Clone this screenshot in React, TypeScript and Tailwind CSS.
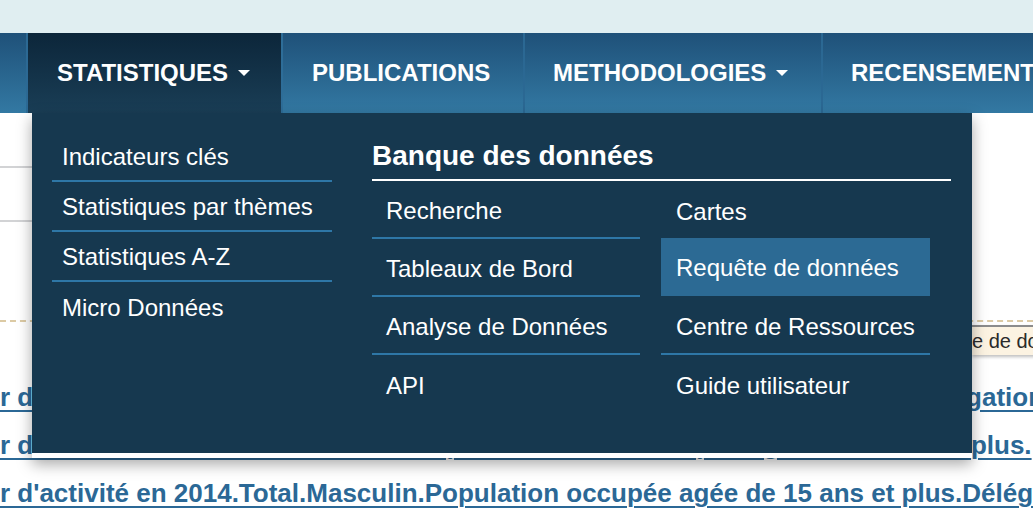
import React from 'react';

const leftLinks = ['Indicateurs clés', 'Statistiques par thèmes', 'Statistiques A-Z', 'Micro Données'];

const bankRows: [string, string][] = [
  ['Recherche', 'Cartes'],
  ['Tableaux de Bord', 'Requête de données'],
  ['Analyse de Données', 'Centre de Ressources'],
  ['API', 'Guide utilisateur'],
];

const resultLines = [
  "r d'activité en 2014.Total.Total.Population occupée agée de 15 ans et plus.Délégation",
  "r d'activité en 2014.Total.Féminin.Population active occupée agée de 15 ans et plus.",
  "r d'activité en 2014.Total.Masculin.Population occupée agée de 15 ans et plus.Délégation",
];

const Caret = () => (
  <span className="inline-block w-0 h-0 border-l-[6px] border-r-[6px] border-t-[6px] border-l-transparent border-r-transparent border-t-white" />
);

const App: React.FC = () => {
  return (
    <div className="w-[1033px] h-[520px] overflow-hidden bg-white font-['Liberation_Sans',Arial,sans-serif]">
      {/* Top band */}
      <div className="h-[33px] bg-[#e0eef1]" />

      {/* Main nav */}
      <nav className="h-[80px] flex bg-gradient-to-b from-[#1f5179] to-[#3379a3] text-white text-[24px] font-bold uppercase whitespace-nowrap">
        <div className="w-[28px] shrink-0 border-r-2 border-[#2c6994]" />
        <div className="w-[253px] shrink-0 flex items-center gap-[10px] pl-[29px] bg-gradient-to-b from-[#0c263a] to-[#1a3e56]">
          Statistiques <Caret />
        </div>
        <div className="w-[242px] shrink-0 flex items-center pl-[29px] border-l-2 border-[#2e6d98]">Publications</div>
        <div className="w-[298px] shrink-0 flex items-center gap-[10px] pl-[28px] border-l-2 border-[#2b6893]">
          Methodologies <Caret />
        </div>
        <div className="flex-1 flex items-center pl-[28px] border-l-2 border-[#2b6893]">Recensement</div>
      </nav>

      {/* Page content under the menu */}
      <div className="relative">
        <div className="pt-[53px]">
          <div className="w-[320px] h-[54px] border-t-2 border-[#d2d3d5]" />
          <div className="w-[320px] h-[100px] border-t-2 border-[#d2d3d5]" />
          <div className="border-t-2 border-dashed border-[#dccaa4]" />
          <div className="pt-[51px]">
            {resultLines.map((line, i) => (
              <div key={i} className="h-[48px] leading-[48px] text-[26px] font-bold text-[#2b6896] underline underline-offset-[4px] decoration-[2px] whitespace-nowrap">
                {line}
              </div>
            ))}
          </div>
        </div>

        {/* Tooltip */}
        <div className="absolute left-[972px] top-[212px] h-[30px] pr-4 flex items-center bg-[#fcf3e2] border-t-2 border-[#8c8c8c] shadow-[0_2px_3px_rgba(0,0,0,0.25)] text-[20px] text-[#2a2a2a] whitespace-nowrap">
          e de données
        </div>

        {/* Dropdown panel */}
        <div className="absolute left-[32px] top-0 w-[940px] pb-[5px] bg-white shadow-[0_6px_14px_rgba(0,0,0,0.35)]">
          <div className="h-[340px] bg-[#16384f] text-white flex pl-[20px] pt-[19px]">
            <ul className="w-[280px] shrink-0">
              {leftLinks.map((label, i) => (
                <li
                  key={label}
                  className={`h-[50px] flex items-center pl-[10px] pt-[2px] text-[24px] ${i < leftLinks.length - 1 ? 'border-b-2 border-[#2e77a7]' : ''}`}
                >
                  {label}
                </li>
              ))}
            </ul>

            <div className="w-[579px] ml-[40px]">
              <h3 className="h-[49px] flex items-center text-[28px] font-bold border-b-2 border-white">Banque des données</h3>
              <div className="grid grid-cols-[268px_269px] gap-x-[21px]">
                {bankRows.map(([a, b], i) => {
                  const last = i === bankRows.length - 1;
                  const active = b === 'Requête de données';
                  return (
                    <React.Fragment key={a}>
                      <div className={`h-[58px] flex items-center pl-[14px] pt-[3px] text-[24px] ${last ? '' : 'border-b-2 border-[#2e77a7]'}`}>{a}</div>
                      <div
                        className={`h-[58px] flex items-center pl-[15px] pt-[3px] text-[24px] ${
                          active ? 'bg-[#2c6a94] border-b-2 border-[#2c6a94] -mt-px' : last || i === 0 ? '' : 'border-b-2 border-[#2e77a7]'
                        }`}
                      >
                        {b}
                      </div>
                    </React.Fragment>
                  );
                })}
              </div>
            </div>
          </div>
        </div>
      </div>
    </div>
  );
};

export default App;
